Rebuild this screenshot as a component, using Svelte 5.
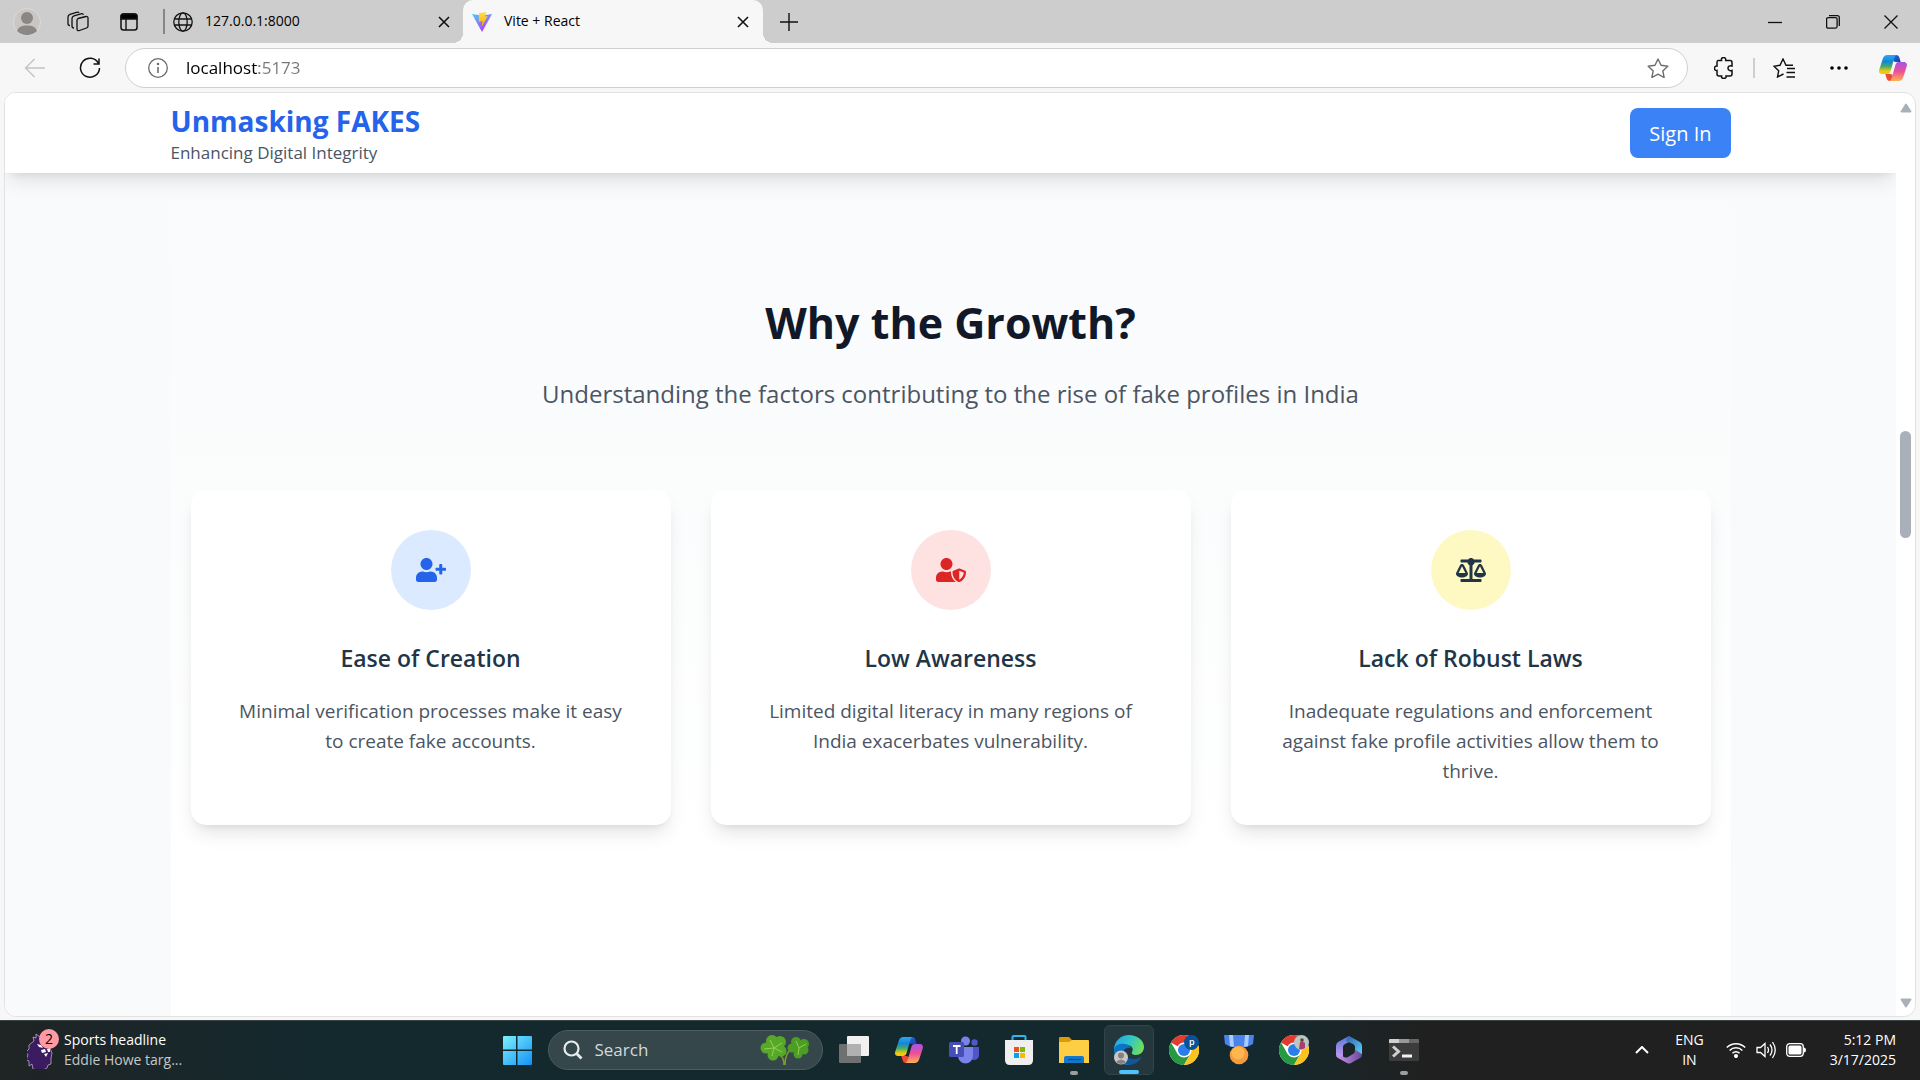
<script>
  const cards = [
    {
      title: 'Ease of Creation',
      text: 'Minimal verification processes make it easy to create fake accounts.',
      tone: 'blue',
      path: 'M624 208h-64v-64c0-8.800-7.200-16-16-16h-32c-8.800 0-16 7.200-16 16v64h-64c-8.800 0-16 7.200-16 16v32c0 8.800 7.200 16 16 16h64v64c0 8.800 7.200 16 16 16h32c8.800 0 16-7.200 16-16v-64h64c8.800 0 16-7.200 16-16v-32c0-8.800-7.200-16-16-16zm-400 48c70.700 0 128-57.300 128-128S294.700 0 224 0 96 57.300 96 128s57.300 128 128 128zm89.600 32h-16.700c-22.200 10.200-46.900 16-72.900 16s-50.600-5.800-72.900-16h-16.700C60.200 288 0 348.200 0 422.400V464c0 26.500 21.500 48 48 48h352c26.500 0 48-21.500 48-48v-41.600c0-74.200-60.200-134.400-134.400-134.400z'
    },
    {
      title: 'Low Awareness',
      text: 'Limited digital literacy in many regions of India exacerbates vulnerability.',
      tone: 'red',
      path: 'M622.300 271.100l-115.200-45c-4.100-1.600-12.600-3.700-22.200 0l-115.200 45c-10.700 4.200-17.700 14-17.700 24.900 0 111.600 68.700 188.800 132.900 213.900 9.600 3.700 18 1.600 22.200 0C558.400 489.900 640 420.500 640 296c0-10.900-7-20.700-17.700-24.900zM496 462.400V273.300l95.500 37.300c-5.600 87.100-60.900 135.400-95.500 151.800zM224 256c70.700 0 128-57.300 128-128S294.700 0 224 0 96 57.300 96 128s57.300 128 128 128zm96 40c0-2.500.8-4.800 1.100-7.200-2.500-.1-4.900-.8-7.500-.8h-16.700c-22.200 10.200-46.900 16-72.900 16s-50.600-5.800-72.900-16h-16.700C60.200 288 0 348.200 0 422.400V464c0 26.500 21.500 48 48 48h352c6.800 0 13.300-1.500 19.200-4-54-42.900-99.200-116.700-99.200-212z'
    },
    {
      title: 'Lack of Robust Laws',
      text: 'Inadequate regulations and enforcement against fake profile activities allow them to thrive.',
      tone: 'yellow',
      path: 'M256 336h-.02c0-16.180 1.340-8.730-85.050-181.510-17.650-35.290-68.190-35.360-85.870 0C-2.060 328.750.02 320.330.02 336H0c0 44.180 57.310 80 128 80s128-35.820 128-80zM128 176l72 144H56l72-144zm511.980 160c0-16.180 1.340-8.730-85.050-181.510-17.650-35.290-68.190-35.360-85.870 0-87.120 174.260-85.040 165.840-85.040 181.510H384c0 44.180 57.310 80 128 80s128-35.820 128-80h-.02zM440 320l72-144 72 144H440zm88 128H352V153.250c23.510-10.290 41.160-31.480 46.390-57.250H528c8.840 0 16-7.160 16-16V48c0-8.840-7.160-16-16-16H383.640C369.040 12.680 346.090 0 320 0s-49.040 12.680-63.640 32H112c-8.840 0-16 7.160-16 16v32c0 8.840 7.160 16 16 16h129.610c5.230 25.770 22.880 46.960 46.390 57.250V448H112c-8.840 0-16 7.160-16 16v32c0 8.840 7.160 16 16 16h416c8.840 0 16-7.160 16-16v-32c0-8.840-7.160-16-16-16z'
    }
  ];

  let address = $state('localhost:5173');
</script>

{#snippet closeX()}
  <svg class="line" width="12" height="12" viewBox="0 0 12 12"><path d="M1 1l10 10M11 1L1 11" stroke-width="1.6" /></svg>
{/snippet}

{#snippet copilot(id)}
  <svg width="30" height="30" viewBox="0 0 30 30">
    <defs>
      <linearGradient id="{id}a" x1="0" y1="0" x2="0" y2="1">
        <stop offset="0" stop-color="#2aa9f0" /><stop offset=".35" stop-color="#1684d8" /><stop offset=".6" stop-color="#43ad68" /><stop offset=".85" stop-color="#f2c811" />
      </linearGradient>
      <linearGradient id="{id}b" x1="0" y1="0" x2="0" y2="1">
        <stop offset="0" stop-color="#a553e8" /><stop offset=".5" stop-color="#ee5097" /><stop offset="1" stop-color="#ffb152" />
      </linearGradient>
      <linearGradient id="{id}c" x1="0" y1="0" x2="1" y2="1">
        <stop offset="0" stop-color="#1d6fe0" /><stop offset="1" stop-color="#1b3cb8" />
      </linearGradient>
    </defs>
    <path d="M14 2h4c2 0 3 1.200 3.500 3l1.200 4H18c-2 0-3-1-3.500-3z" fill="url(#{id}c)" />
    <path d="M16 28h-4c-2 0-3-1.200-3.500-3l-1.200-4H12c2 0 3 1 3.500 3z" fill="#ee4b32" />
    <path d="M18.500 2H9.500C7 2 5.500 3.500 4.700 6L1.300 16.500C.4 19.500 1.800 21 4.500 21H9c2 0 3-1 3.600-3l3.300-11.500C16.600 4 17.300 2.500 18.500 2z" fill="url(#{id}a)" />
    <path d="M11.500 28h9c2.500 0 4-1.500 4.800-4l3.400-10.500C29.600 10.500 28.200 9 25.500 9H21c-2 0-3 1-3.600 3l-3.300 11.500c-.7 2.500-1.400 4-2.600 4.500z" fill="url(#{id}b)" />
  </svg>
{/snippet}

{#snippet chrome()}
  <circle cx="15" cy="15" r="15" fill="#fff" />
  <path d="M15 15L2 7.500A15 15 0 0 1 28 7.500H15z" fill="#e33b2e" />
  <path d="M2 7.500A15 15 0 0 0 15 30l6.500-11.200L15 15l-6.500 3.700z" fill="#269a43" />
  <path d="M28 7.500A15 15 0 0 1 15 30l6.500-11.300c1.500-3 1.300-7-2.500-11.200z" fill="#fcc31e" />
  <circle cx="15" cy="15" r="7.500" fill="#fff" />
  <circle cx="15" cy="15" r="6" fill="#2b7de9" />
{/snippet}

<div class="screen">
  <header class="tabbar">
    <div class="tab-tools">
      <button aria-label="Profile">
        <svg width="28" height="28" viewBox="0 0 28 28"><circle cx="14" cy="14" r="13.500" fill="#c9c6c3" stroke="#dedbd7" /><circle cx="14" cy="10" r="6" fill="#8b8785" /><path d="M4 23c1.500-4.500 5.500-5.500 10-5.500s8.500 1 10 5.500c-5.500 5.500-14.500 5.500-20 0z" fill="#8b8785" /></svg>
      </button>
      <button aria-label="Workspaces">
        <svg class="line" width="22" height="22" viewBox="0 0 22 22"><path d="M11 7.500l8-2c1-.2 2 .3 2 1.500v8c0 1-.5 1.700-1.500 2l-7 2.500c-1.500.5-2.500 0-2.500-1.500V9.500c0-1 .3-1.700 1-2zM7 17c-1.500 0-2-.6-2-2V7.500c0-1.500.5-2.200 2-2.700l7-2c1.300-.3 2.200 0 2.500 1M3 14.500c-1.500 0-2-.6-2-2V6c0-1.500.5-2.200 2-2.700l6.500-2c1.300-.3 2.200 0 2.500.8" stroke-width="1.300" /></svg>
      </button>
      <button aria-label="Tab actions">
        <svg class="line" width="18" height="18" viewBox="0 0 18 18"><rect x="1" y="1" width="16" height="16" rx="2.500" stroke-width="1.500" /><path d="M1 6V3.500Q1 1 3.500 1h11Q17 1 17 3.500V6z" fill="#000" /><path d="M6 6v11" stroke-width="1.400" /></svg>
      </button>
    </div>
    <span class="tab-divider"></span>
    <div class="tab idle">
      <svg class="line" width="20" height="20" viewBox="0 0 20 20"><circle cx="10" cy="10" r="9.200" /><ellipse cx="10" cy="10" rx="4.200" ry="9.200" /><path d="M1.500 7h17M1.500 13h17" /></svg>
      <span class="tab-title">127.0.0.1:8000</span>
      <button aria-label="Close tab 127.0.0.1:8000">{@render closeX()}</button>
    </div>
    <div class="tab active">
      <svg width="20" height="20" viewBox="0 0 20 20">
        <defs>
          <linearGradient id="vite" x1="0" y1="0" x2=".6" y2="1"><stop offset="0" stop-color="#41d1ff" /><stop offset="1" stop-color="#bd34fe" /></linearGradient>
          <linearGradient id="bolt" x1="0" y1="0" x2="0" y2="1"><stop offset="0" stop-color="#ffe04a" /><stop offset="1" stop-color="#ffa800" /></linearGradient>
        </defs>
        <path d="M0 2l10 1.500L20 2 10 20z" fill="url(#vite)" /><path d="M7 1l7.500-1-1.800 4.500 3-.5-6 11 .8-6-3.800.8z" fill="url(#bolt)" />
      </svg>
      <span class="tab-title">Vite + React</span>
      <button aria-label="Close tab Vite + React">{@render closeX()}</button>
    </div>
    <button class="new-tab" aria-label="New tab">
      <svg class="line" width="18" height="18" viewBox="0 0 18 18"><path d="M9 0v18M0 9h18" stroke-width="1.400" /></svg>
    </button>
    <div class="window-controls">
      <button aria-label="Minimize"><svg class="line" width="14" height="14" viewBox="0 0 14 14"><path d="M0 7.500h14" /></svg></button>
      <button aria-label="Restore"><svg class="line" width="14" height="14" viewBox="0 0 14 14"><rect x=".6" y="2.600" width="10.500" height="10.500" rx="1.500" /><path d="M3 .7h8.300a2 2 0 0 1 2 2V11" /></svg></button>
      <button aria-label="Close window"><svg class="line" width="14" height="14" viewBox="0 0 14 14"><path d="M.5.5l13 13M13.500.5l-13 13" /></svg></button>
    </div>
  </header>

  <div class="toolbar">
    <div class="nav-buttons">
      <button aria-label="Back" disabled><svg width="22" height="20" viewBox="0 0 22 20" fill="none" stroke="#c4c4c4" stroke-width="1.400"><path d="M21 10H1.500M10.500 1L1.500 10l9 9" /></svg></button>
      <button aria-label="Refresh"><svg class="line" width="22" height="22" viewBox="0 0 22 22"><path d="M19.500 6.500A9.500 9.500 0 1 0 20.500 11M20 1.500v5.500h-5.500" stroke-width="1.500" /></svg></button>
    </div>
    <div class="address">
      <svg width="20" height="20" viewBox="0 0 20 20" fill="none" stroke="#6c6c6c" stroke-width="1.300"><circle cx="10" cy="10" r="9.300" /><path d="M10 9v6" stroke-width="1.600" /><circle cx="10" cy="6" r=".6" fill="#6c6c6c" /></svg>
      <input type="text" aria-label="Address and search bar" bind:value={address} />
      <button aria-label="Add to favorites"><svg width="22" height="20" viewBox="0 0 22 20" fill="none" stroke="#6c6c6c" stroke-width="1.400" stroke-linejoin="round"><path d="M11 1l3 6.300 6.800.9-5 4.700 1.300 6.600L11 16.200l-6.100 3.300 1.300-6.600-5-4.700 6.800-.9z" /></svg></button>
    </div>
    <div class="browser-actions">
      <button aria-label="Extensions"><svg class="line" width="20" height="22" viewBox="0 0 20 22"><path d="M4 3.500h3.500c-.5-2 .8-3 2-3s2.800 1 2.200 3H16q2 0 2 2V9c-2.500-.7-4 .5-4 2.200s1.500 3 4 2.200V17q0 2-2 2h-4c.5 1.800-.9 2.500-2.200 2.500S7.200 20.700 7.600 19H5q-2 0-2-2v-3.500c-1.700.3-2.500-.9-2.500-2.200S1.500 8.700 3 9V5.500q0-2 1-2z" stroke-width="1.500" /></svg></button>
      <span class="tool-divider"></span>
      <button aria-label="Favorites"><svg class="line" width="22" height="20" viewBox="0 0 22 20"><path d="M14 10.500h8M13.500 14.500H22M13.500 19H22M10.500 16L4.500 19l1.200-6.300L1 8.200l6-.9L10 1l3 6.300h7" stroke-width="1.400" /></svg></button>
      <button aria-label="Settings and more"><svg width="18" height="4" viewBox="0 0 18 4"><circle cx="2" cy="2" r="1.800" /><circle cx="9" cy="2" r="1.800" /><circle cx="16" cy="2" r="1.800" /></svg></button>
      <button aria-label="Copilot">{@render copilot('top')}</button>
    </div>
  </div>

  <div class="frame">
    <div class="viewport">
      <header class="site-header">
        <div class="container bar">
          <div class="brand">
            <h1>Unmasking FAKES</h1>
            <p class="tagline">Enhancing Digital Integrity</p>
          </div>
          <button class="sign-in">Sign In</button>
        </div>
      </header>
      <main class="container">
        <section class="growth">
          <h2>Why the Growth?</h2>
          <p class="lead">Understanding the factors contributing to the rise of fake profiles in India</p>
          <div class="cards">
            {#each cards as card}
              <article class="card">
                <span class="badge {card.tone}"><svg width="30" height="24" viewBox="0 0 640 512" fill="currentColor"><path d={card.path} /></svg></span>
                <h3>{card.title}</h3>
                <p>{card.text}</p>
              </article>
            {/each}
          </div>
        </section>
      </main>
    </div>
    <div class="scrollbar" aria-hidden="true">
      <svg width="12" height="10" viewBox="0 0 12 10"><path d="M6 1.500L10.500 8.500h-9z" fill="#a9b0ba" stroke="#a9b0ba" stroke-width="1.800" stroke-linejoin="round" /></svg>
      <span class="before"></span>
      <span class="thumb"></span>
      <span class="after"></span>
      <svg width="12" height="10" viewBox="0 0 12 10"><path d="M6 8.500L1.500 1.500h9z" fill="#a9b0ba" stroke="#a9b0ba" stroke-width="1.800" stroke-linejoin="round" /></svg>
    </div>
  </div>

  <footer class="taskbar">
    <button class="news">
      <span class="news-icon">
        <svg width="26" height="38" viewBox="0 0 26 38"><path d="M7 10l-1-4 3 1 0-4 4 3 3-3 1 5 3 3 3 6 2 5-1 5 0 6-3 1-1 3-4 2-6 0-4-1-1-5-3 2 0-5-3-1 2-5-2-3 3-3 0-4z" fill="#3b1c61" stroke="#b9a9c9" stroke-width=".8" /><path d="M10 13l4 1 2 3-4-1zM14 19l4-1 1 3-4 1zM20 18l3-1v4h-2zM17 23l4-1-2 4z" fill="#fff" /></svg>
        <span class="count">2</span>
      </span>
      <span class="news-text"><span>Sports headline</span><span class="muted">Eddie Howe targ...</span></span>
    </button>

    <div class="apps">
      <button class="app" aria-label="Start">
        <svg width="30" height="30" viewBox="0 0 30 30"><defs><linearGradient id="win" x1="0" y1="0" x2="1" y2="1"><stop offset="0" stop-color="#7cf0fe" /><stop offset="1" stop-color="#1391f5" /></linearGradient></defs><path d="M1 2q0-1 1-1h12v13.500H1zM15.500 1H29q1 0 1 1v12.500H15.500zM1 16h13v14H2q-1 0-1-1zM15.500 16H30v13q0 1-1 1H15.500z" fill="url(#win)" /></svg>
      </button>
      <button class="search">
        <svg width="20" height="20" viewBox="0 0 20 20" fill="none" stroke="#e6ebec" stroke-width="2.200"><circle cx="8.500" cy="8.500" r="7" /><path d="M13.500 13.500l5 5" stroke-width="2.800" /></svg>
        <span>Search</span>
        <svg class="clover" width="50" height="32" viewBox="0 0 50 32">
          <path d="M24 31c0-5-1-8-4-10M25 31c0-8 3-14 7-16" fill="none" stroke="#7a9a2c" stroke-width="1.600" />
          <g fill="#56a829"><circle cx="12" cy="7" r="6" /><circle cx="20" cy="8" r="6" /><circle cx="6" cy="14" r="5.500" /><circle cx="21" cy="17" r="5.500" /><circle cx="13" cy="21" r="5.500" /><circle cx="14" cy="14" r="6" /></g>
          <g fill="#4c9d24"><circle cx="36" cy="8" r="5" /><circle cx="32" cy="14" r="4.500" /><circle cx="44" cy="10" r="5" /><circle cx="44" cy="16" r="4.500" /><circle cx="38" cy="20" r="4.500" /><circle cx="39" cy="14" r="5" /></g>
          <path d="M14 14L10 6M14 14L4 15M14 14l8-5M14 14l8 4M14 14l-2 8M39 14l-3-7M39 14l7-4M39 14l-1 7" fill="none" stroke="#94d152" stroke-width="1" />
        </svg>
      </button>
      <button class="app" aria-label="Task view">
        <svg width="30" height="30" viewBox="0 0 30 30"><rect x="8" y="1" width="22" height="20" rx="1" fill="#f1f1f1" /><rect y="9" width="22" height="19" rx="1" fill="#6f7070" /><path d="M8 9h14v12H8z" fill="#b1b1b1" /></svg>
      </button>
      <button class="app" aria-label="Copilot app">{@render copilot('dock')}</button>
      <button class="app" aria-label="Teams">
        <svg width="30" height="30" viewBox="0 0 30 30"><circle cx="16.500" cy="6" r="4.500" fill="#7b83eb" /><circle cx="25.500" cy="7.500" r="3.200" fill="#5059c9" /><path d="M20 12h10v8a5 5 0 0 1-9 3z" fill="#4f57c8" /><path d="M9 12h15v9a7.500 7.500 0 0 1-15 0z" fill="#7b83eb" /><rect y="7" width="15" height="15" rx="1.500" fill="#464eb8" /><path d="M4 11h7.500M7.700 11v8" stroke="#fff" stroke-width="1.800" /></svg>
      </button>
      <button class="app" aria-label="Store">
        <svg width="30" height="30" viewBox="0 0 30 30"><path d="M8.500 6V2q0-1 1-1h11q1 0 1 1v4" fill="none" stroke="#31b3ef" stroke-width="2" /><path d="M1 5h28v20q0 5-5 5H6q-5 0-5-5z" fill="#efefef" /><path fill="#f04e23" d="M10 12h5v5h-5z" /><path fill="#7fb900" d="M16 12h5v5h-5z" /><path fill="#04a3ee" d="M10 18h5v5h-5z" /><path fill="#feb800" d="M16 18h5v5h-5z" /></svg>
      </button>
      <button class="app" aria-label="File Explorer">
        <svg width="30" height="28" viewBox="0 0 30 28"><path d="M0 2q0-1 1-1h9l3 3h15v8H0z" fill="#dd9a08" /><path d="M0 6h10l3-2h16q1 0 1 1v22H0z" fill="#fdce44" /><path d="M5 27v-5q0-2 2-2h16q2 0 2 2v5z" fill="#1178cb" /><path d="M9 23.500h13" stroke="#0a4f94" stroke-width="1.200" /></svg>
        <span class="dot"></span>
      </button>
      <button class="app current" aria-label="Microsoft Edge">
        <svg width="30" height="30" viewBox="0 0 30 30">
          <defs><linearGradient id="edge" x1="0" y1=".2" x2="1" y2=".5"><stop offset="0" stop-color="#22a4e8" /><stop offset=".5" stop-color="#2fc4c9" /><stop offset="1" stop-color="#6ee05a" /></linearGradient></defs>
          <path d="M0 15C0 6 7 0 15 0s15 5 15 12c0 5-4 8-8 8-3 0-5-1-4-3 2-3 0-7-5-7C6 10 0 13 0 18z" fill="url(#edge)" />
          <path d="M0 16c0-5 5-8 10-7 4 0 6 2 7 4-5-1-8 2-8 6s4 9 11 8c-2 2-4 3-6 3C5 30 0 23 0 16z" fill="#0c72c4" />
          <path d="M11 14c-2 6 2 10 9 10 4 0 6-2 7-2 1 0 0 1 0 1-3 5-8 7-12 7-6-1-9-9-4-16z" fill="#125697" />
          <circle cx="7" cy="22.500" r="7" fill="#c9c7c5" /><circle cx="7" cy="20.500" r="3" fill="#85817e" /><path d="M2 27q5-5 10 0-5 4-10 0z" fill="#85817e" />
        </svg>
        <span class="dot wide"></span>
      </button>
      <button class="app" aria-label="Chrome, first profile">
        <svg width="30" height="30" viewBox="0 0 30 30">{@render chrome()}<circle cx="22.500" cy="7.500" r="7.500" fill="#06539b" /><text x="20" y="10" font-size="9" font-weight="600" fill="#fff">p</text></svg>
      </button>
      <button class="app" aria-label="Rewards">
        <svg width="30" height="30" viewBox="0 0 30 30"><path d="M0 0h30l-1 9-6 3H7L1 9z" fill="#4a83ec" /><path d="M5 0h4l1 12-4-1zM21 0h4l-1 11-4 1z" fill="#a9ccfb" /><circle cx="15" cy="20" r="9.300" fill="#f79a3e" /><circle cx="14" cy="18" r="6.500" fill="#fdb74e" /></svg>
      </button>
      <button class="app" aria-label="Chrome, second profile">
        <svg width="30" height="30" viewBox="0 0 30 30">{@render chrome()}<circle cx="22.500" cy="7.500" r="7.500" fill="#b8c6c4" /><path d="M20 14l1-7 2-1 3 2 0 5q-3 2-6 1z" fill="#a83f68" /><circle cx="23" cy="5" r="1.800" fill="#59443d" /></svg>
      </button>
      <button class="app" aria-label="Microsoft 365">
        <svg width="28" height="30" viewBox="0 0 28 30">
          <defs>
            <linearGradient id="mleft" x1="0" y1="0" x2="0" y2="1"><stop offset="0" stop-color="#5a78d8" /><stop offset="1" stop-color="#c79af0" /></linearGradient>
            <linearGradient id="mtop" x1="0" y1="0" x2="1" y2="1"><stop offset="0" stop-color="#2c5fae" /><stop offset="1" stop-color="#5fd4fb" /></linearGradient>
            <linearGradient id="mbase" x1="0" y1="0" x2="1" y2="0"><stop offset="0" stop-color="#c79af0" /><stop offset="1" stop-color="#6c4699" /></linearGradient>
          </defs>
          <path d="M14 1L3 7q-2 1.500-2 4v9l7 3V12q0-2 2-3l8-4z" fill="url(#mleft)" /><path d="M14 1l11 6q2 1.500 2 4v9l-7-5v-3q0-2-2-3l-7-3q0-3 3-5z" fill="url(#mtop)" /><path d="M1 20q0 2 2 3l9 5q2 1 4 0l9-5q2-1 2-4l-7-4q0 3-2 4l-5 3q-2 1-4 0l-2-1z" fill="url(#mbase)" />
        </svg>
      </button>
      <button class="app" aria-label="Terminal">
        <svg width="30" height="24" viewBox="0 0 30 24"><rect y="1" width="30" height="22" rx="1.500" fill="#3c3c3c" /><path d="M0 2q0-1 1-1h9v4H0z" fill="#d0d0d0" /><path d="M10 1h10v4H10z" fill="#989898" /><path d="M20 1h9q1 0 1 1v3H20z" fill="#666" /><path d="M4 8.500l5.500 5L4 18.500" fill="none" stroke="#d0d0d0" stroke-width="3" /><path d="M13 18h10" stroke="#f2f2f2" stroke-width="3" /></svg>
        <span class="dot"></span>
      </button>
    </div>

    <div class="tray">
      <button aria-label="Show hidden icons"><svg width="14" height="8" viewBox="0 0 14 8" fill="none" stroke="#fff" stroke-width="2"><path d="M1 7l6-6 6 6" /></svg></button>
      <button class="lang"><span>ENG</span><span>IN</span></button>
      <button class="status" aria-label="Network, volume and battery">
        <svg width="20" height="16" viewBox="0 0 20 16" fill="none" stroke="#fff" stroke-width="1.500"><path d="M.8 5.500a13 13 0 0 1 18.400 0M3.600 8.500a9 9 0 0 1 12.800 0M6.500 11.300a5 5 0 0 1 7 0" /><circle cx="10" cy="14" r="1.300" fill="#fff" /></svg>
        <svg width="20" height="18" viewBox="0 0 20 18" fill="none" stroke="#fff" stroke-width="1.300"><path d="M1 6.500h3.500L9 2.500v13l-4.500-4H1zM11.500 6q2 3 0 6M14 3.500q4 5.500 0 11M16.500 1q5.500 8 0 16" /></svg>
        <svg width="20" height="14" viewBox="0 0 20 14"><rect x=".7" y=".7" width="16.600" height="12.600" rx="3" fill="none" stroke="#fff" stroke-width="1.300" /><rect x="2.500" y="2.500" width="13" height="9" rx="1.500" fill="#fff" /><path d="M18 4.500q2 0 2 2.500t-2 2.500z" fill="#fff" /></svg>
      </button>
      <button class="clock"><span>5:12 PM</span><span>3/17/2025</span></button>
    </div>
  </footer>
</div>

<style>
  :global(body) {
    margin: 0;
  }

  .screen {
    display: flex;
    flex-direction: column;
    height: 100vh;
    overflow: hidden;
    background: #f7f7f7;
    color: #000;
    font-family: 'Open Sans', 'Noto Sans', sans-serif;
  }

  .screen * {
    box-sizing: border-box;
  }

  svg {
    display: block;
    flex: none;
  }

  .line {
    fill: none;
    stroke: #111;
    stroke-width: 1.3;
  }

  button {
    display: flex;
    align-items: center;
    justify-content: center;
    padding: 0;
    border: 0;
    background: none;
    color: inherit;
    font: inherit;
  }

  h1, h2, h3, p {
    margin: 0;
  }

  /* Tab strip */
  .tabbar {
    display: flex;
    align-items: stretch;
    height: 43px;
    flex: none;
    background: #cdcdcd;
    font-size: 14px;
  }

  .tab-tools {
    display: flex;
    width: 154px;
    padding-left: 2px;
  }

  .tab-tools button {
    flex: 1;
  }

  .tab-divider {
    align-self: center;
    width: 2px;
    height: 25px;
    margin: 0 8px 0 9px;
    background: #868686;
  }

  .tab {
    display: flex;
    align-items: center;
    gap: 12px;
  }

  .tab button {
    width: 16px;
    height: 16px;
  }

  .tab-title {
    flex: 1;
    padding-bottom: 2px;
    line-height: 20px;
  }

  .idle {
    width: 290px;
    padding-right: 11px;
  }

  .active {
    position: relative;
    width: 300px;
    padding: 0 12px 0 9px;
    border-radius: 10px 10px 0 0;
    background: #f7f7f7;
  }

  .active::before,
  .active::after {
    content: '';
    position: absolute;
    bottom: 0;
    width: 10px;
    height: 10px;
  }

  .active::before {
    right: 100%;
    background: radial-gradient(circle at 0 0, #cdcdcd 10px, #f7f7f7 10px);
  }

  .active::after {
    left: 100%;
    background: radial-gradient(circle at 100% 0, #cdcdcd 10px, #f7f7f7 10px);
  }

  .new-tab {
    width: 52px;
  }

  .window-controls {
    display: flex;
    margin-left: auto;
  }

  .window-controls button {
    width: 58px;
  }

  /* Address row */
  .toolbar {
    display: flex;
    align-items: center;
    height: 49px;
    flex: none;
  }

  .nav-buttons {
    display: flex;
    width: 125px;
    padding: 0 8px;
  }

  .nav-buttons button {
    flex: 1;
  }

  .address {
    display: flex;
    flex: 1;
    align-items: center;
    height: 40px;
    padding: 0 18px 0 22px;
    border: 1px solid #d0d0d0;
    border-radius: 20px;
    background: #fff;
  }

  .address input {
    flex: 1;
    margin-left: 18px;
    padding: 0;
    border: 0;
    outline: 0;
    background: linear-gradient(90deg, #000 73px, #767676 73px);
    background-clip: text;
    color: transparent;
    font: inherit;
    font-size: 17px;
    line-height: 24px;
  }

  .browser-actions {
    display: flex;
    align-items: center;
    width: 232px;
    padding-left: 9px;
  }

  .browser-actions button {
    width: 56px;
    height: 40px;
  }

  .tool-divider {
    width: 2px;
    height: 20px;
    margin: 0 2px;
    background: #cfcfcf;
  }

  /* Page frame */
  .frame {
    display: flex;
    flex: 1;
    min-height: 0;
    margin: 0 4px 3px;
    overflow: hidden;
    border: 1px solid #e2e2e2;
    border-radius: 12px;
    background: #fff;
  }

  .viewport {
    flex: 1;
    overflow: hidden;
    background: #f8fafc;
  }

  .container {
    max-width: 1600px;
    margin: 0 auto;
    padding: 0 20px;
  }

  .site-header {
    position: relative;
    background: #fff;
    box-shadow: 0 12px 19px -4px rgba(0, 0, 0, 0.1), 0 5px 8px -5px rgba(0, 0, 0, 0.1);
  }

  .bar {
    display: flex;
    align-items: center;
    justify-content: space-between;
    height: 80px;
  }

  .brand {
    padding-top: 5px;
  }

  h1 {
    color: #2563eb;
    font-size: 28px;
    font-weight: 700;
    line-height: 35px;
  }

  .tagline {
    color: #4b5563;
    font-size: 17px;
    line-height: 28px;
  }

  .sign-in {
    height: 50px;
    padding: 0 19px;
    border-radius: 8px;
    background: #3b82f6;
    color: #fff;
    font-size: 20px;
    font-weight: 500;
  }

  .growth {
    padding: 125px 20px 240px;
    background: linear-gradient(180deg, #f8fafc, #fcfdfd 45%, #fff 80%);
    text-align: center;
  }

  h2 {
    color: #111827;
    font-size: 43px;
    font-weight: 700;
    line-height: 50px;
  }

  .lead {
    margin: 28px 0 79px;
    color: #4b5563;
    font-size: 24px;
    line-height: 35px;
  }

  .cards {
    display: grid;
    grid-template-columns: repeat(3, 1fr);
    gap: 40px;
  }

  .card {
    display: flex;
    flex-direction: column;
    align-items: center;
    padding: 40px 40px 39px;
    border-radius: 15px;
    background: #fff;
    box-shadow: 0 12px 19px -4px rgba(0, 0, 0, 0.1), 0 5px 8px -5px rgba(0, 0, 0, 0.1);
  }

  .badge {
    display: grid;
    place-items: center;
    width: 80px;
    height: 80px;
    border-radius: 50%;
  }

  .blue {
    background: #dbeafe;
    color: #2563eb;
  }

  .red {
    background: #fee2e2;
    color: #dc2626;
  }

  .yellow {
    background: #fef9c3;
    color: #213547;
  }

  h3 {
    margin: 31px 0 20px;
    color: #213547;
    font-size: 23px;
    font-weight: 600;
    line-height: 35px;
  }

  .card p {
    color: #4b5563;
    font-size: 19px;
    line-height: 30px;
  }

  .scrollbar {
    display: flex;
    flex-direction: column;
    align-items: center;
    width: 19px;
    padding: 10px 0 8px;
  }

  .before {
    flex: 313;
  }

  .thumb {
    width: 11px;
    height: 107px;
    border-radius: 6px;
    background: #a9b0ba;
  }

  .after {
    flex: 453;
  }

  /* Taskbar */
  .taskbar {
    display: grid;
    grid-template-columns: 1fr auto 1fr;
    align-items: center;
    height: 60px;
    flex: none;
    padding-bottom: 2px;
    border-top: 1px solid #3a4446;
    background: linear-gradient(90deg, #202425, #14292e 16%, #14292e 66%, #202020 74%);
    color: #fff;
    font-size: 14px;
    line-height: 20px;
  }

  .news {
    justify-self: start;
    gap: 11px;
    padding-left: 27px;
  }

  .news-icon {
    position: relative;
  }

  .count {
    position: absolute;
    top: -2px;
    left: 12px;
    width: 20px;
    height: 20px;
    border-radius: 50%;
    background: #ff99a4;
    color: #000;
  }

  .news-text {
    display: flex;
    flex-direction: column;
    text-align: left;
  }

  .muted {
    color: #c4c8c9;
  }

  .apps {
    display: flex;
    align-items: center;
    gap: 5px;
  }

  .app {
    position: relative;
    width: 50px;
    height: 50px;
    border-radius: 6px;
  }

  .app text {
    font-family: 'Open Sans', sans-serif;
  }

  .current {
    border: 1px solid #31444a;
    background: #24373c;
  }

  .dot {
    position: absolute;
    bottom: 0;
    left: 50%;
    width: 8px;
    height: 4px;
    border-radius: 2px;
    background: #9a9fa0;
    transform: translateX(-50%);
  }

  .wide {
    width: 20px;
    background: #4cc2ff;
  }

  .search {
    justify-content: flex-start;
    gap: 12px;
    width: 275px;
    height: 40px;
    margin: 0 1px;
    padding: 0 12px 0 14px;
    border: 1px solid #4c5c60;
    border-radius: 20px;
    background: #35474b;
    color: #d3d9da;
    font-size: 17px;
  }

  .clover {
    margin-left: auto;
  }

  .tray {
    display: flex;
    align-items: center;
    justify-self: end;
    padding-right: 24px;
  }

  .lang,
  .clock {
    flex-direction: column;
  }

  .lang {
    margin: 0 22px 0 26px;
  }

  .status {
    gap: 10px;
    margin-right: 24px;
  }

  .clock {
    align-items: flex-end;
  }
</style>
